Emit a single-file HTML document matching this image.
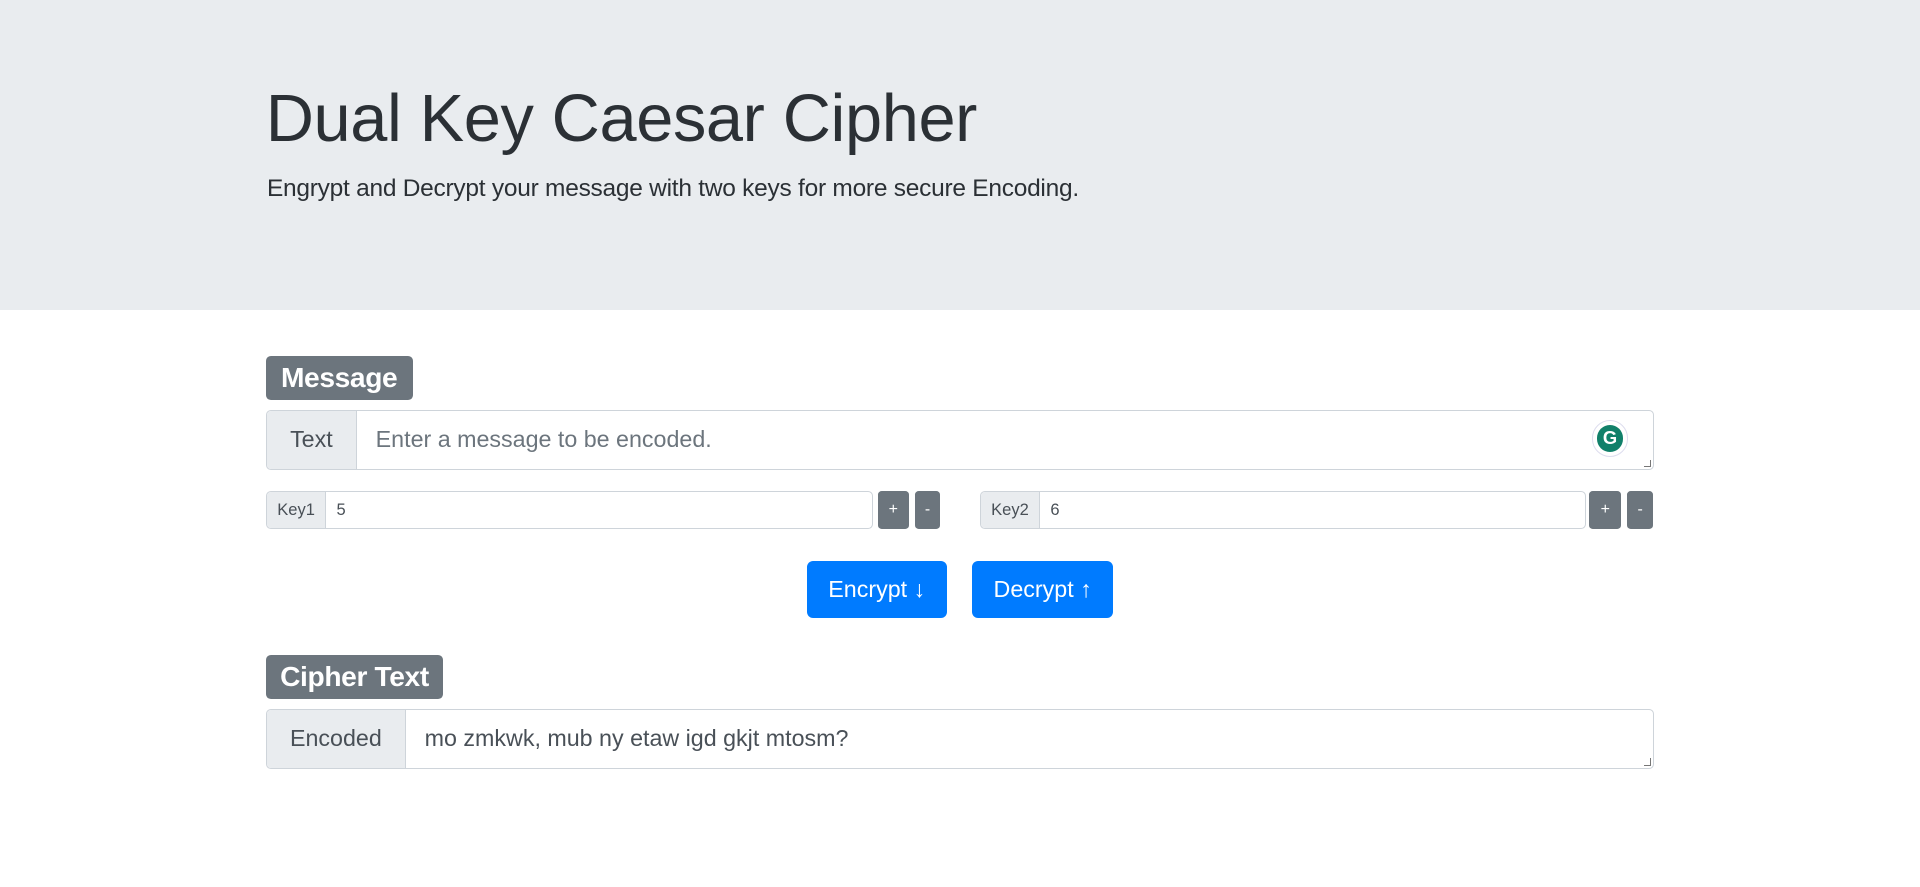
<!DOCTYPE html>
<html><head><meta charset="utf-8">
<style>
html,body{margin:0;padding:0;background:#fff;overflow:hidden}
body{width:1920px;height:887px}
#z{zoom:1.2245;width:1568px;height:725px;position:relative;font-family:"Liberation Sans",sans-serif}
.a{position:absolute;box-sizing:border-box}
.jumbo{left:0;top:0;width:1568px;height:253px;background:#e9ecef}
.title{left:217px;top:66px;font-size:54.5px;font-weight:300;color:#2b3035;white-space:nowrap;letter-spacing:-0.3px}
.lead{left:218px;top:143px;font-size:20px;color:#2b3035;white-space:nowrap;letter-spacing:-0.2px}
.badge{background:#6c757d;color:#fff;font-weight:bold;font-size:23px;border-radius:4px;text-align:center;line-height:36px;letter-spacing:-0.3px}
.grp{border:1px solid #ced4da;border-radius:4px;background:#fff;overflow:hidden}
.pre{position:absolute;left:0;top:0;bottom:0;background:#e9ecef;border-right:1px solid #ced4da;color:#495057;text-align:center}
.btn{background:#6c757d;border-radius:3px;color:#fff;font-size:13px;text-align:center;line-height:31px}
.blue{background:#007bff;border-radius:5px;color:#fff;font-size:19px;text-align:center;line-height:47px}
.rz{position:absolute;right:2px;bottom:2px;width:5px;height:5px;border-right:1px solid #777;border-bottom:1px solid #777}
</style></head><body><div id="z">
<div class="a jumbo"></div>
<div class="a title">Dual Key Caesar Cipher</div>
<div class="a lead">Engrypt and Decrypt your message with two keys for more secure Encoding.</div>

<div class="a badge" style="left:217px;top:291px;width:120px;height:36px">Message</div>
<div class="a grp" style="left:217px;top:335px;width:1134px;height:49px">
 <div class="pre" style="width:73px;font-size:19px;line-height:47px">Text</div>
 <div class="a" style="left:89px;top:0;line-height:47px;font-size:19px;color:#6c757d;white-space:nowrap">Enter a message to be encoded.</div>
 <div class="a" style="left:1082px;top:7px;width:30px;height:30px;border-radius:50%;border:1px solid #dde;background:#fff"></div>
 <div class="a" style="left:1086px;top:11px;width:22px;height:22px;border-radius:50%;background:#11806a;color:#fff;font-size:15px;font-weight:bold;text-align:center;line-height:22px">G</div>
 <div class="rz"></div>
</div>

<div class="a grp" style="left:217px;top:401px;width:496px;height:31px">
 <div class="pre" style="width:48px;font-size:13.5px;line-height:29px">Key1</div>
 <div class="a" style="left:57px;top:0;line-height:29px;font-size:13.5px;color:#495057">5</div>
</div>
<div class="a btn" style="left:717px;top:401px;width:25px;height:31px">+</div>
<div class="a btn" style="left:747px;top:401px;width:21px;height:31px">-</div>

<div class="a grp" style="left:800px;top:401px;width:495px;height:31px">
 <div class="pre" style="width:48px;font-size:13.5px;line-height:29px">Key2</div>
 <div class="a" style="left:57px;top:0;line-height:29px;font-size:13.5px;color:#495057">6</div>
</div>
<div class="a btn" style="left:1298px;top:401px;width:26px;height:31px">+</div>
<div class="a btn" style="left:1329px;top:401px;width:21px;height:31px">-</div>

<div class="a blue" style="left:659px;top:458px;width:114px;height:47px">Encrypt ↓</div>
<div class="a blue" style="left:794px;top:458px;width:115px;height:47px">Decrypt ↑</div>

<div class="a badge" style="left:217px;top:535px;width:145px;height:36px">Cipher Text</div>
<div class="a grp" style="left:217px;top:579px;width:1134px;height:49px">
 <div class="pre" style="width:113px;font-size:19px;line-height:47px">Encoded</div>
 <div class="a" style="left:129px;top:0;line-height:47px;font-size:19px;color:#495057;white-space:nowrap">mo zmkwk, mub ny etaw igd gkjt mtosm?</div>
 <div class="rz"></div>
</div>
</div></body></html>
